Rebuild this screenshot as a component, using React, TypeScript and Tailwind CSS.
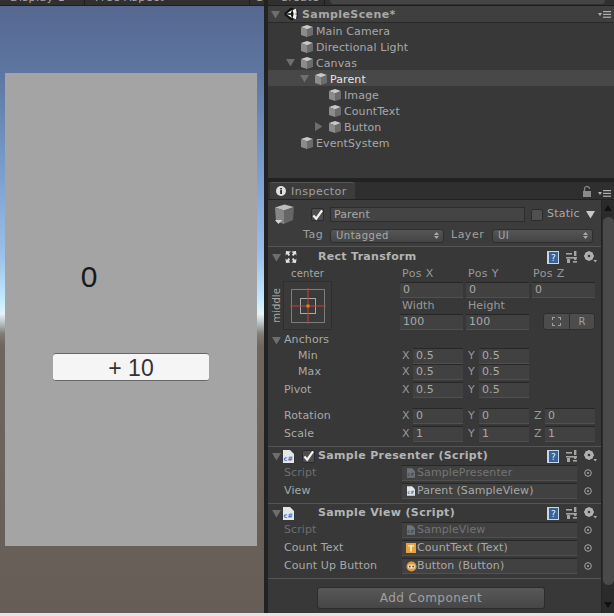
import React from "react";

const Cube = ({ size = 14 }: { size?: number }) => (
  <svg width={size} height={size} viewBox="0 0 14 14" className="shrink-0">
    <path d="M7 1 L13 3 L7 5.5 L1 3 Z" fill="#c8c8c8" />
    <path d="M1 3 L7 5.5 V13 L1 11 Z" fill="#8c8c8c" />
    <path d="M13 3 L7 5.5 V13 L13 11 Z" fill="#6c6c6c" />
  </svg>
);

const BigCube = () => (
  <svg width="21" height="21" viewBox="0 0 21 21" className="shrink-0">
    <path d="M10.5 0.5 L20 3 L10 6.5 L1 3.5 Z" fill="#bdbdbd" />
    <path d="M1 3.5 L10 6.5 V20 L2 17.5 Z" fill="#868686" />
    <path d="M20 3 L10 6.5 V20 L19 16 Z" fill="#666666" />
    <path d="M1 16 H8 L4.5 20 Z" fill="#d4d4d4" />
  </svg>
);

const Down = ({ c = "#6e6e6e", s = 9 }: { c?: string; s?: number }) => (
  <svg width={s} height={s} viewBox="0 0 9 9" className="shrink-0">
    <path d="M0 1 H9 L4.5 8.5 Z" fill={c} />
  </svg>
);

const Right = () => (
  <svg width="9" height="9" viewBox="0 0 9 9" className="shrink-0">
    <path d="M1 0 V9 L8.5 4.5 Z" fill="#6e6e6e" />
  </svg>
);

const Unity = () => (
  <svg width="14" height="14" viewBox="0 0 14 14" className="shrink-0">
    <path d="M7 0.5 L13.5 3 V11 L7 13.5 L0.5 8 V6 Z" fill="#111" />
    <path d="M2 7 L8 3 L6.8 6.2 H3.8 Z M2 7 L8 11 L6.8 7.8 H3.8 Z M8.6 3 L12 1.8 L12.8 6.4 L10.3 7 L12.8 7.6 L12 12.2 L8.6 11 L9.6 7 Z" fill="#f2f2f2" />
  </svg>
);

const Row = ({ indent, label, selected, arrow }: { indent: number; label: string; selected?: boolean; arrow?: "down" | "right" }) => (
  <div className={`h-4 flex items-center ${selected ? "bg-[#484848] text-[#e4e4e4]" : "text-[#a8a8a8]"}`} style={{ paddingLeft: indent }}>
    <span className="w-[14px] flex shrink-0">{arrow === "down" ? <Down /> : arrow === "right" ? <Right /> : null}</span>
    <span className="flex pt-[2px]"><Cube /></span>
    <span className="ml-[2px] pt-[4px] leading-4">{label}</span>
  </div>
);

const Field = ({ w, children, dim }: { w: number; children?: React.ReactNode; dim?: boolean }) => (
  <div
    className={`h-[16px] shrink-0 bg-[#414141] border-t border-t-[#272727] border-b border-b-[#505050] pl-[3px] leading-[14px] flex items-center overflow-hidden whitespace-nowrap ${dim ? "text-[#747474]" : "text-[#a8a8a8]"}`}
    style={{ width: w }}
  >
    {children}
  </div>
);

const Xyz = ({ items }: { items: [string, string][] }) => (
  <div className="flex">
    {items.map(([l, v], i) => (
      <div key={i} className={`flex items-center ${i ? "ml-[5px]" : ""}`}>
        <span className="w-[11px] text-[#989898] leading-4">{l}</span>
        <Field w={50}>{v}</Field>
      </div>
    ))}
  </div>
);

const Prop = ({ label, indent = 16, items, mb = 0, arrow }: { label: string; indent?: number; items?: [string, string][]; mb?: number; arrow?: boolean }) => (
  <div className="flex h-4 items-center" style={{ marginBottom: mb }}>
    <div className="w-[134px] shrink-0 flex items-center text-[#a8a8a8]" style={{ paddingLeft: arrow ? 4 : indent }}>
      {arrow ? <span className="w-[12px] flex"><Down /></span> : null}
      {label}
    </div>
    {items ? <Xyz items={items} /> : null}
  </div>
);

const Help = () => (
  <svg width="12" height="13" viewBox="0 0 12 13" className="shrink-0">
    <rect x="0" y="0" width="12" height="13" fill="#c4d6ea" />
    <rect x="2" y="1" width="9" height="11" fill="#3a6297" />
    <text x="4" y="10" fontSize="9" fill="#e6eef8" fontFamily="'DejaVu Sans',sans-serif">?</text>
  </svg>
);

const Sliders = () => (
  <svg width="11" height="12" viewBox="0 0 11 12" className="shrink-0" fill="#a4a4a4">
    <rect x="0" y="2" width="6" height="1.6" />
    <rect x="8" y="0" width="2.4" height="5" />
    <rect x="0" y="6" width="11" height="1.6" />
    <rect x="1" y="8" width="3" height="4" />
    <rect x="7" y="10" width="4" height="1.6" />
    <rect x="8" y="6" width="2.4" height="3" />
  </svg>
);

const Gear = () => (
  <svg width="13" height="12" viewBox="0 0 13 12" className="shrink-0">
    <circle cx="5" cy="5" r="3.4" fill="none" stroke="#b0b0b0" strokeWidth="2.4" />
    <path d="M5 0 V10 M0 5 H10 M1.6 1.6 L8.4 8.4 M8.4 1.6 L1.6 8.4" stroke="#b0b0b0" strokeWidth="1.5" />
    <circle cx="5" cy="5" r="1.3" fill="#383838" />
    <path d="M9.5 9 H13 L11.2 11.5 Z" fill="#b0b0b0" />
  </svg>
);

const CSharp = ({ dim, small }: { dim?: boolean; small?: boolean }) => (
  <svg width={small ? 8 : 11} height={small ? 10 : 13} viewBox="0 0 11 13" className="shrink-0">
    <path d="M0 0 H7 L11 4 V13 H0 Z" fill={dim ? "#6f7276" : "#e6e6e6"} />
    <text x="0.5" y="10.5" fontSize="6.5" fontWeight="700" fill={dim ? "#3d4a5c" : "#3f78c8"} fontFamily="'DejaVu Sans',sans-serif">c#</text>
  </svg>
);

const Check = () => (
  <div className="w-[13px] h-[13px] shrink-0 rounded-[2px] bg-[#4e4e4e] border border-[#2c2c2c] flex items-center justify-center">
    <svg width="12" height="12" viewBox="0 0 12 12">
      <path d="M1.5 6.5 L4.6 10 L11 1" fill="none" stroke="#f4f4f4" strokeWidth="2.4" />
    </svg>
  </div>
);

const Pick = () => (
  <svg width="8" height="8" viewBox="0 0 8 8" className="shrink-0">
    <circle cx="4" cy="4" r="3.3" fill="none" stroke="#a8a8a8" />
    <circle cx="4" cy="4" r="1" fill="#a8a8a8" />
  </svg>
);

const Sep = () => <div className="h-px bg-[#555555]" />;

const CompHeader = ({ title, check, icon }: { title: string; check?: boolean; icon: React.ReactNode }) => (
  <div className="h-4 flex items-center pl-[4px] pr-[4px]">
    <Down />
    <span className="ml-[2px] w-[15px] h-[15px] flex items-center justify-start shrink-0">{icon}</span>
    <span className="w-[4px] shrink-0" />
    {check ? <Check /> : <span className="w-[13px] shrink-0" />}
    <span className="ml-[3px] font-bold text-[#b4b4b4] tracking-[0.35px] whitespace-nowrap">{title}</span>
    <div className="ml-auto flex items-center gap-[7px]">
      <Help />
      <Sliders />
      <Gear />
    </div>
  </div>
);

const ObjRow = ({ label, dim, icon, children, mb = 2 }: { label: string; dim?: boolean; icon: React.ReactNode; children: string; mb?: number }) => (
  <div className="h-4 flex items-center" style={{ marginBottom: mb }}>
    <div className={`w-[134px] pl-[16px] shrink-0 ${dim ? "text-[#6e6e6e]" : "text-[#a8a8a8]"}`}>{label}</div>
    <Field w={175} dim={dim}>
      <span className="flex items-center">
        <span className="w-[12px] flex justify-center shrink-0">{icon}</span>
        <span>{children}</span>
      </span>
    </Field>
    <span className="ml-[7px] flex"><Pick /></span>
  </div>
);

const TextIcon = () => (
  <svg width="10" height="10" viewBox="0 0 10 10" className="shrink-0">
    <rect width="10" height="10" fill="#e8a33d" />
    <path d="M2 2 H8 V3.5 H5.9 V8.5 H4.1 V3.5 H2 Z" fill="#f6e7c8" />
  </svg>
);

const ButtonIcon = () => (
  <svg width="11" height="11" viewBox="0 0 11 11" className="shrink-0">
    <circle cx="5.5" cy="5.5" r="5" fill="#e09a34" />
    <rect x="2" y="3.5" width="7" height="4" rx="1.5" fill="#f2e6d0" />
    <circle cx="3.8" cy="5.5" r="1" fill="#555" />
    <circle cx="7.2" cy="5.5" r="1" fill="#555" />
  </svg>
);

const Select = ({ w, children }: { w: number; children: string }) => (
  <div
    className="h-[14px] rounded-[3px] bg-[linear-gradient(#555555,#454545)] border border-[#2e2e2e] flex items-center justify-between pl-[5px] pr-[4px] text-[#a8a8a8] text-[10px] shrink-0"
    style={{ width: w }}
  >
    <span className="tracking-[0.5px]">{children}</span>
    <span className="flex flex-col gap-[1px]">
      <svg width="5" height="3" viewBox="0 0 5 3"><path d="M0 3 L2.5 0 L5 3 Z" fill="#a8a8a8" /></svg>
      <svg width="5" height="3" viewBox="0 0 5 3"><path d="M0 0 L2.5 3 L5 0 Z" fill="#a8a8a8" /></svg>
    </span>
  </div>
);

const TopBar = ({ children }: { children: React.ReactNode }) => (
  <div className="h-[6px] shrink-0 bg-[#303030] border-b border-b-[#1e1e1e] overflow-hidden flex text-[#a8a8a8] text-[11px] leading-[14px]">
    {children}
  </div>
);

export default function App() {
  return (
    <div className="w-[614px] h-[616px] overflow-hidden flex flex-col bg-[#e4e4e4] font-['DejaVu_Sans',sans-serif] text-[11px] tracking-[0.1px]">
      <div className="h-[613px] flex bg-[#222222]">
        {/* Game view */}
        <div className="w-[264px] shrink-0 flex flex-col">
          <TopBar>
            <span className="ml-[10px] -mt-[9px] w-[74px] tracking-[0.45px]">Display 1</span>
            <span className="w-px h-full bg-[#1e1e1e]" />
            <span className="ml-[10px] -mt-[9px] w-[154px] tracking-[0.45px]">Free Aspect</span>
            <span className="w-px h-full bg-[#1e1e1e]" />
            <span className="ml-[5px] -mt-[9px]">G</span>
          </TopBar>
          <div className="flex-1 pl-[5px] pr-[7px] flex items-center bg-[linear-gradient(#56688f_0px,#5d77a2_70px,#7d9fd0_170px,#9cc0ea_250px,#c6ebff_295px,#e4f3f8_308px,#b4bcbc_318px,#7f7b76_328px,#6f6660_340px,#675d57_607px)]">
            <div className="w-[252px] h-[473px] bg-[#a4a4a4] flex flex-col font-['Liberation_Sans',sans-serif] tracking-normal">
              <div className="mt-[187px] ml-[48px] w-[72px] h-[34px] flex items-center justify-center text-[30px] leading-[34px] text-[#1a1a1a]">0</div>
              <div className="mt-[59px] ml-[48px] w-[156px] h-[28px] pt-[2px] rounded-[3px] bg-[#f5f5f5] border-y border-y-[#666666] flex items-center justify-center text-[23px] leading-[24px] text-[#333333]">+ 10</div>
            </div>
          </div>
        </div>

        {/* Right column */}
        <div className="ml-[4px] flex-1 flex flex-col min-w-0">
          <TopBar>
            <span className="ml-[12px] -mt-[9px] w-[44px] tracking-[0.45px]">Create</span>
            <span className="w-px h-full bg-[#1e1e1e]" />
            <span className="ml-[5px] w-[275px] h-[4px] rounded-b-[4px] bg-[#454545]" />
          </TopBar>
          {/* Hierarchy */}
          <div className="h-[172px] shrink-0 bg-[#383838] flex flex-col">
            <div className="h-[17px] shrink-0 bg-[#3f3f3f] border-b border-b-[#282828] flex items-center pl-[3px] pr-[3px] gap-[4px]">
              <Down />
              <Unity />
              <span className="font-bold text-[#a8a8a8] tracking-[0.4px] pt-[2px]">SampleScene*</span>
              <span className="ml-auto flex items-center gap-[1px]">
                <svg width="4" height="3" viewBox="0 0 4 3"><path d="M0 0 H4 L2 3 Z" fill="#b0b0b0" /></svg>
                <svg width="8" height="7" viewBox="0 0 8 7" fill="#b0b0b0"><rect width="8" height="1.2" /><rect y="2.8" width="8" height="1.2" /><rect y="5.6" width="8" height="1.2" /></svg>
              </span>
            </div>
            <div className="-mt-px flex flex-col">
              <Row indent={18} label="Main Camera" />
              <Row indent={18} label="Directional Light" />
              <Row indent={18} arrow="down" label="Canvas" />
              <Row indent={32} arrow="down" label="Parent" selected />
              <Row indent={46} label="Image" />
              <Row indent={46} label="CountText" />
              <Row indent={46} arrow="right" label="Button" />
              <Row indent={18} label="EventSystem" />
            </div>
          </div>
          <div className="h-[4px] bg-[#222222] shrink-0" />
          {/* Inspector tab */}
          <div className="h-[17px] shrink-0 bg-[#2f2f2f] flex items-end">
            <div className="ml-[2px] w-[85px] h-[17px] rounded-t-[3px] bg-[#3c3c3c] border-t border-t-[#555555] flex items-center pl-[6px] gap-[5px] text-[#a0a0a0] tracking-[0.5px]">
              <svg width="10" height="10" viewBox="0 0 10 10" className="shrink-0">
                <circle cx="5" cy="5" r="5" fill="#e0e0e0" />
                <rect x="4.2" y="4" width="1.7" height="4" fill="#222" />
                <rect x="4.2" y="2" width="1.7" height="1.4" fill="#222" />
              </svg>
              <span className="pt-[2px]">Inspector</span>
            </div>
            <div className="ml-auto mr-[3px] mb-[2px] flex items-end gap-[1px]">
              <svg width="9" height="11" viewBox="0 0 9 11" className="mr-[5px]">
                <rect y="5" width="8" height="6" fill="#8a8a8a" />
                <path d="M1.5 5 V3 A2.5 2.5 0 0 1 6.5 3" fill="none" stroke="#8a8a8a" strokeWidth="1.2" />
              </svg>
              <svg width="4" height="3" viewBox="0 0 4 3" className="mb-[2px]"><path d="M0 0 H4 L2 3 Z" fill="#b0b0b0" /></svg>
              <svg width="8" height="7" viewBox="0 0 8 7" fill="#b0b0b0"><rect width="8" height="1.2" /><rect y="2.8" width="8" height="1.2" /><rect y="5.6" width="8" height="1.2" /></svg>
            </div>
          </div>
          {/* Inspector body */}
          <div className="flex-1 flex min-h-0 border-t border-t-[#222222]">
            <div className="flex-1 bg-[#383838] flex flex-col min-w-0">
              {/* Object header */}
              <div className="h-[46px] shrink-0 bg-[#3c3c3c] flex flex-col">
                <div className="h-[27px] pt-[2px] flex items-center pl-[6px]">
                  <BigCube />
                  <span className="ml-[16px]"><Check /></span>
                  <div className="ml-[6px] w-[195px] h-[15px] bg-[#444444] border border-[#2c2c2c] pl-[3px] leading-[14px] text-[#a8a8a8]">Parent</div>
                  <div className="ml-[6px] w-[12px] h-[12px] rounded-[2px] bg-[#505050] border border-[#2c2c2c]" />
                  <span className="ml-[4px] text-[#a8a8a8] tracking-[0.2px]">Static</span>
                  <span className="ml-[6px] flex"><Down c="#c8c8c8" /></span>
                </div>
                <div className="h-[17px] flex items-center pl-[35px]">
                  <span className="w-[27px] text-[#a0a0a0] tracking-[0.5px]">Tag</span>
                  <Select w={114}>Untagged</Select>
                  <span className="ml-[7px] w-[41px] text-[#a0a0a0] tracking-[0.5px]">Layer</span>
                  <Select w={101}>UI</Select>
                </div>
              </div>
              <Sep />
              {/* Rect Transform */}
              <div className="h-4 mt-[2px] flex items-center pl-[4px] pr-[4px]">
                <Down />
                <svg width="16" height="16" viewBox="0 0 16 16" className="ml-[2px] shrink-0" fill="#e0e0e0">
                  <path d="M3 2 L8 2.5 L6 4 L7 6 L5.5 7 L4 5 L2.5 6.5 Z M13 2 L8.5 2.5 L10 4 L9 6 L10.5 7 L12 5 L13.5 6.5 Z M3 14 L7.5 13.5 L6 12 L7 10 L5.5 9 L4 11 L2.5 9.5 Z M13 14 L8.5 13.5 L10 12 L9 10 L10.5 9 L12 11 L13.5 9.5 Z" />
                </svg>
                <span className="ml-[19px] font-bold text-[#b4b4b4] tracking-[0.3px]">Rect Transform</span>
                <div className="ml-auto flex items-center gap-[7px]">
                  <Help />
                  <Sliders />
                  <Gear />
                </div>
              </div>
              <div className="flex h-[65px] shrink-0">
                <div className="w-[132px] shrink-0 flex">
                  <div className="w-[15px] flex items-center justify-center pt-[16px]">
                    <span className="[writing-mode:vertical-rl] rotate-180 text-[#a8a8a8] text-[10px] leading-none ml-[3px]">middle</span>
                  </div>
                  <div className="flex flex-col items-center w-[49px]">
                    <span className="h-4 leading-4 text-[10px] pt-[1px] text-[#a8a8a8]">center</span>
                    <div className="w-[49px] h-[49px] border border-[#2f2f2f] flex items-center justify-center bg-[#3a3a3a]">
                      <svg width="36" height="36" viewBox="0 0 36 36">
                        <rect x="1.5" y="1.5" width="33" height="33" fill="none" stroke="#7c7c7c" />
                        <rect x="10.5" y="10.5" width="15" height="15" fill="none" stroke="#a8a8a8" />
                        <path d="M18 0 V36 M0 18 H36" stroke="#c83c3c" />
                        <rect x="16.5" y="16.5" width="3" height="3" fill="#d9890f" />
                      </svg>
                    </div>
                  </div>
                </div>
                <div className="flex flex-col">
                  <div className="h-[17px] pt-[1px] flex text-[#989898] pl-[2px] tracking-[0.4px]">
                    <span className="w-[66px]">Pos X</span>
                    <span className="w-[65px]">Pos Y</span>
                    <span>Pos Z</span>
                  </div>
                  <div className="flex gap-[3px] h-4">
                    <Field w={63}>0</Field>
                    <Field w={63}>0</Field>
                    <Field w={63}>0</Field>
                  </div>
                  <div className="h-4 flex text-[#989898] pl-[2px]">
                    <span className="w-[66px]">Width</span>
                    <span>Height</span>
                  </div>
                  <div className="flex h-4">
                    <Field w={63}>100</Field>
                    <span className="w-[3px]" />
                    <Field w={63}>100</Field>
                    <div className="ml-[14px] w-[52px] h-[17px] -mt-px flex rounded-[3px] bg-[#4c4c4c] border border-[#2e2e2e] text-[#a0a0a0]">
                      <div className="w-[26px] border-r border-r-[#2e2e2e] flex items-center justify-center">
                        <div className="w-[9px] h-[9px] border border-dashed border-[#a0a0a0]" />
                      </div>
                      <div className="flex-1 flex items-center justify-center text-[10px]">R</div>
                    </div>
                  </div>
                </div>
              </div>
              <div className="mt-[2px]">
                <Prop arrow label="Anchors" />
                <Prop label="Min" indent={30} items={[["X", "0.5"], ["Y", "0.5"]]} />
                <Prop label="Max" indent={30} items={[["X", "0.5"], ["Y", "0.5"]]} mb={2} />
                <Prop label="Pivot" items={[["X", "0.5"], ["Y", "0.5"]]} mb={10} />
                <Prop label="Rotation" items={[["X", "0"], ["Y", "0"], ["Z", "0"]]} mb={2} />
                <Prop label="Scale" items={[["X", "1"], ["Y", "1"], ["Z", "1"]]} />
              </div>
              <div className="mt-[4px]"><Sep /></div>
              <div className="mt-px">
                <CompHeader title="Sample Presenter (Script)" check icon={<CSharp />} />
              </div>
              <div className="mt-px">
                <ObjRow label="Script" dim icon={<CSharp dim small />}>SamplePresenter</ObjRow>
                <ObjRow label="View" icon={<CSharp small />} mb={0}>Parent (SampleView)</ObjRow>
              </div>
              <div className="mt-[4px]"><Sep /></div>
              <div className="mt-px">
                <CompHeader title="Sample View (Script)" icon={<CSharp />} />
              </div>
              <div className="mt-px">
                <ObjRow label="Script" dim icon={<CSharp dim small />}>SampleView</ObjRow>
                <ObjRow label="Count Text" icon={<TextIcon />}>CountText (Text)</ObjRow>
                <ObjRow label="Count Up Button" icon={<ButtonIcon />} mb={0}>Button (Button)</ObjRow>
              </div>
              <div className="mt-[4px]"><Sep /></div>
              <div className="flex-1 flex justify-center items-start pt-[8px] pr-[7px]">
                <div className="w-[228px] h-[22px] rounded-[3px] bg-[linear-gradient(#585858,#464646)] border border-[#2c2c2c] flex items-center justify-center text-[12px] tracking-[0.45px] text-[#a0a0a0]">Add Component</div>
              </div>
            </div>
            {/* Scrollbar */}
            <div className="w-[13px] shrink-0 bg-[#2b2b2b] border-l border-l-[#232323] flex flex-col items-center">
              <svg width="8" height="6" viewBox="0 0 8 6" className="mt-[5px] shrink-0"><path d="M0 6 L4 0 L8 6 Z" fill="#111111" /></svg>
              <div className="mt-[6px] w-[11px] h-[368px] rounded-[6px] bg-[#4a4a4a]" />
              <svg width="8" height="6" viewBox="0 0 8 6" className="mt-auto mb-[5px] shrink-0"><path d="M0 0 L8 0 L4 6 Z" fill="#111111" /></svg>
            </div>
          </div>
        </div>
      </div>
    </div>
  );
}
